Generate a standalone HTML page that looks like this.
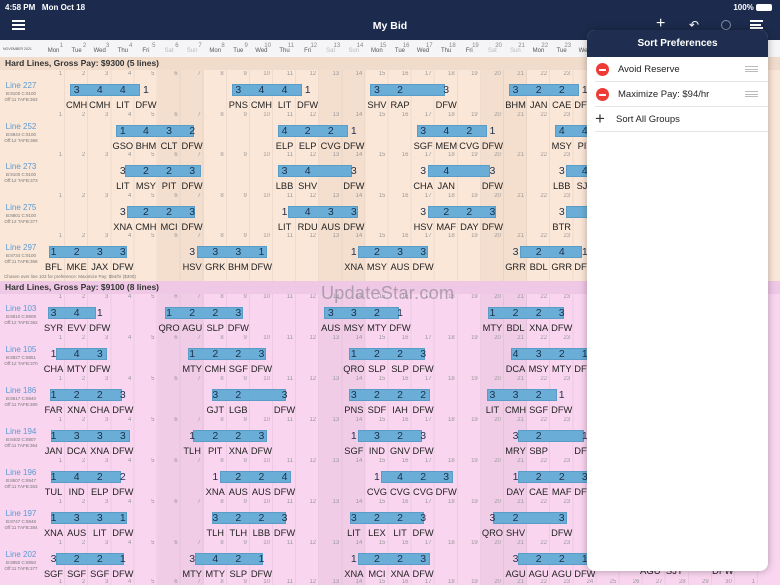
<!DOCTYPE html>
<html><head><meta charset="utf-8"><style>
*{margin:0;padding:0;box-sizing:border-box}
html,body{width:780px;height:585px;overflow:hidden}
body{position:relative;font-family:"Liberation Sans",sans-serif;background:#f9d5ef}
.a{position:absolute}
#nav{left:0;top:0;width:780px;height:40px;background:#1c2b4d;color:#fff}
#dh{left:0;top:40px;width:780px;height:18px;background:#f5f4f6;border-bottom:1px solid #ddd}
.dhr{position:absolute;left:42px;top:0;display:flex}
.dhr span{width:23.1px;height:18px;position:relative;font-size:6px;color:#555;text-align:center;line-height:22px}
.dhr span i{position:absolute;right:2px;top:-5px;font-style:normal;font-size:6px;color:#888}
.dhr span.w{color:#bbb}
.g1{left:0;top:57px;width:780px;height:224px;background:#fbe7d8}
.g2{left:0;top:281px;width:780px;height:304px;background:#f9d5ef}
.gh{position:absolute;left:0;width:780px;height:13px;font-size:8.5px;font-weight:bold;color:#333;padding-left:5px;line-height:13px}
.wk{position:absolute;width:46.2px}
.vl{position:absolute;left:42px;width:738px;background:repeating-linear-gradient(90deg,transparent 0,transparent 22.1px,rgba(0,0,0,.05) 22.1px,rgba(0,0,0,.05) 23.1px)}
.r{position:absolute;left:0;width:780px;height:41px;overflow:hidden}
.dn{position:absolute;left:42px;top:0;display:flex}
.dn span{width:23.1px;text-align:right;padding-right:3px;font-size:6px;color:#999}
.lb{position:absolute;left:0;width:42px;top:10px;text-align:center;color:#5a9ad2;font-size:8px;line-height:10px}
.lb em{display:block;font-style:normal;color:#777;font-size:4.5px;line-height:6px}
.t{position:absolute;top:0}
.t i{position:absolute;top:13px;left:5px;height:12px;background:#6aaed8;border:1px solid #5a9cc8}
.t b{position:absolute;top:12px;left:0;display:flex;font-weight:normal;font-size:10.5px;color:#1d2f4a;line-height:14px}
.t u{position:absolute;top:28px;left:0;display:flex;text-decoration:none;font-size:9.3px;color:#222;line-height:12px}
.t s{text-decoration:none;width:23.1px;text-align:center;display:block;white-space:nowrap}
#pop{left:587px;top:30px;width:181px;height:541px;background:#fff;border-radius:8px;box-shadow:0 0 8px rgba(0,0,0,.3);overflow:hidden}
#pop .h{height:27px;background:#1f2e50;color:#fff;font-weight:bold;font-size:10px;text-align:center;line-height:27px}
.pr{position:relative;height:25px;border-bottom:1px solid #e4e4e4;margin-left:8px;font-size:9.5px;color:#222;line-height:25px;padding-left:23px}
.mi{position:absolute;left:1px;top:6px;width:13px;height:13px;border-radius:50%;background:#ef3b36}
.mi:after{content:"";position:absolute;left:3px;top:6px;width:7px;height:1.5px;background:#fff}
.hd{position:absolute;right:10px;top:9px;width:13px;height:6px;border-top:1px solid #bbb;border-bottom:1px solid #bbb}
.hd:after{content:"";position:absolute;left:0;top:2px;width:13px;border-top:1px solid #bbb}
</style></head><body>
<div id="nav" class="a">
<div class="a" style="left:5px;top:3px;font-size:8px;font-weight:bold">4:58 PM&nbsp;&nbsp;&nbsp;Mon Oct 18</div>
<div class="a" style="right:8px;top:3px;font-size:8px;font-weight:bold">100% <span style="display:inline-block;width:16px;height:7px;background:#fff;border-radius:2px;vertical-align:-1px"></span></div>
<div class="a" style="left:12px;top:20px;width:13px;height:10px;border-top:2px solid #fff;border-bottom:2px solid #fff"><div style="margin-top:2px;border-top:2px solid #fff"></div></div>
<div class="a" style="left:0;width:780px;top:20px;text-align:center;font-size:10.5px;font-weight:bold">My Bid</div>
<div class="a" style="left:656px;top:15px;font-size:16px;font-weight:300">+</div>
<div class="a" style="left:689px;top:18px;font-size:12px">&#8630;</div>
<div class="a" style="left:721px;top:20px;width:10px;height:10px;border:1.5px solid #8890a6;border-radius:50%"></div>
<div class="a" style="left:750px;top:20px;width:13px;height:9px;border-top:2px solid #fff;border-bottom:2px solid #fff"><div style="margin-top:1.5px;width:11px;border-top:2px solid #fff"></div></div>
</div>
<div id="dh" class="a">
<div class="a" style="left:3px;top:7px;font-size:3.5px;color:#555">NOVEMBER 2021</div>
<div class="dhr"><span>Mon<i>1</i></span><span>Tue<i>2</i></span><span>Wed<i>3</i></span><span>Thu<i>4</i></span><span>Fri<i>5</i></span><span class="w">Sat<i>6</i></span><span class="w">Sun<i>7</i></span><span>Mon<i>8</i></span><span>Tue<i>9</i></span><span>Wed<i>10</i></span><span>Thu<i>11</i></span><span>Fri<i>12</i></span><span class="w">Sat<i>13</i></span><span class="w">Sun<i>14</i></span><span>Mon<i>15</i></span><span>Tue<i>16</i></span><span>Wed<i>17</i></span><span>Thu<i>18</i></span><span>Fri<i>19</i></span><span class="w">Sat<i>20</i></span><span class="w">Sun<i>21</i></span><span>Mon<i>22</i></span><span>Tue<i>23</i></span><span>Wed<i>24</i></span><span>Thu<i>25</i></span><span>Fri<i>26</i></span><span class="w">Sat<i>27</i></span><span class="w">Sun<i>28</i></span><span>Mon<i>29</i></span><span>Tue<i>30</i></span><span>Wed<i>1</i></span></div>
</div>

<div class="a g1">
<div class="wk" style="left:157.5px;top:13px;height:211px;background:#f4dfcf"></div>
<div class="wk" style="left:319.2px;top:13px;height:211px;background:#f4dfcf"></div>
<div class="wk" style="left:480.9px;top:13px;height:211px;background:#f4dfcf"></div>
<div class="vl" style="top:13px;height:211px"></div>
<div class="gh" style="top:0;background:#f1dccb">Hard Lines, Gross Pay: $9300 (5 lines)</div>
<div class="a" style="left:4px;top:217px;font-size:4.5px;color:#777">Chosen over line 103 for preference: Maximize Pay: $94/hr ($300)</div>
</div>
<div class="a g2">
<div class="wk" style="left:157.5px;top:12px;height:292px;background:#f1cce7"></div>
<div class="wk" style="left:319.2px;top:12px;height:292px;background:#f1cce7"></div>
<div class="wk" style="left:480.9px;top:12px;height:292px;background:#f1cce7"></div>
<div class="vl" style="top:12px;height:292px"></div>
<div class="gh" style="top:0;background:#efc8e6">Hard Lines, Gross Pay: $9100 (8 lines)</div>
</div>

<div class="r" style="top:71px">
<div class="dn"><span>1</span><span>2</span><span>3</span><span>4</span><span>5</span><span>6</span><span>7</span><span>8</span><span>9</span><span>10</span><span>11</span><span>12</span><span>13</span><span>14</span><span>15</span><span>16</span><span>17</span><span>18</span><span>19</span><span>20</span><span>21</span><span>22</span><span>23</span><span>24</span></div>
<div class="lb">Line 227<em>B:9100 C:9100</em><em>Off:11 TAFB:363</em></div>
<div class="t" style="left:65.1px"><i style="width:70px"></i><b><s>3</s><s>4</s><s>4</s><s>1</s></b><u><s>CMH</s><s>CMH</s><s>LIT</s><s>DFW</s></u></div>
<div class="t" style="left:226.8px"><i style="width:70px"></i><b><s>3</s><s>4</s><s>4</s><s>1</s></b><u><s>PNS</s><s>CMH</s><s>LIT</s><s>DFW</s></u></div>
<div class="t" style="left:365.4px"><i style="width:75px"></i><b><s>3</s><s>2</s><s></s><s>3</s></b><u><s>SHV</s><s>RAP</s><s></s><s>DFW</s></u></div>
<div class="t" style="left:504px"><i style="width:70px"></i><b><s>3</s><s>2</s><s>2</s><s>1</s></b><u><s>BHM</s><s>JAN</s><s>CAE</s><s>DFW</s></u></div>
</div>
<div class="r" style="top:111.5px">
<div class="dn"><span>1</span><span>2</span><span>3</span><span>4</span><span>5</span><span>6</span><span>7</span><span>8</span><span>9</span><span>10</span><span>11</span><span>12</span><span>13</span><span>14</span><span>15</span><span>16</span><span>17</span><span>18</span><span>19</span><span>20</span><span>21</span><span>22</span><span>23</span><span>24</span></div>
<div class="lb">Line 252<em>B:8844 C:9100</em><em>Off:12 TAFB:368</em></div>
<div class="t" style="left:111.3px"><i style="width:78px"></i><b><s>1</s><s>4</s><s>3</s><s>2</s></b><u><s>GSO</s><s>BHM</s><s>CLT</s><s>DFW</s></u></div>
<div class="t" style="left:273px"><i style="width:70px"></i><b><s>4</s><s>2</s><s>2</s><s>1</s></b><u><s>ELP</s><s>ELP</s><s>CVG</s><s>DFW</s></u></div>
<div class="t" style="left:411.6px"><i style="width:70px"></i><b><s>3</s><s>4</s><s>2</s><s>1</s></b><u><s>SGF</s><s>MEM</s><s>CVG</s><s>DFW</s></u></div>
<div class="t" style="left:550.2px"><i style="width:40px"></i><b><s>4</s><s>4</s></b><u><s>MSY</s><s>PIT</s></u></div>
</div>
<div class="r" style="top:152px">
<div class="dn"><span>1</span><span>2</span><span>3</span><span>4</span><span>5</span><span>6</span><span>7</span><span>8</span><span>9</span><span>10</span><span>11</span><span>12</span><span>13</span><span>14</span><span>15</span><span>16</span><span>17</span><span>18</span><span>19</span><span>20</span><span>21</span><span>22</span><span>23</span><span>24</span></div>
<div class="lb">Line 273<em>B:9100 C:9100</em><em>Off:12 TAFB:373</em></div>
<div class="t" style="left:111.3px"><i style="width:76px;left:14px"></i><b><s>3</s><s>2</s><s>2</s><s>3</s></b><u><s>LIT</s><s>MSY</s><s>PIT</s><s>DFW</s></u></div>
<div class="t" style="left:273px"><i style="width:74px;left:5px"></i><b><s>3</s><s>4</s><s></s><s>3</s></b><u><s>LBB</s><s>SHV</s><s></s><s>DFW</s></u></div>
<div class="t" style="left:411.6px"><i style="width:62px;left:16px"></i><b><s>3</s><s>4</s><s></s><s>3</s></b><u><s>CHA</s><s>JAN</s><s></s><s>DFW</s></u></div>
<div class="t" style="left:550.2px"><i style="width:40px;left:16px"></i><b><s>3</s><s>4</s></b><u><s>LBB</s><s>SJT</s></u></div>
</div>
<div class="r" style="top:192.5px">
<div class="dn"><span>1</span><span>2</span><span>3</span><span>4</span><span>5</span><span>6</span><span>7</span><span>8</span><span>9</span><span>10</span><span>11</span><span>12</span><span>13</span><span>14</span><span>15</span><span>16</span><span>17</span><span>18</span><span>19</span><span>20</span><span>21</span><span>22</span><span>23</span><span>24</span></div>
<div class="lb">Line 275<em>B:8801 C:9100</em><em>Off:12 TAFB:377</em></div>
<div class="t" style="left:111.3px"><i style="width:68px;left:16px"></i><b><s>3</s><s>2</s><s>2</s><s>3</s></b><u><s>XNA</s><s>CMH</s><s>MCI</s><s>DFW</s></u></div>
<div class="t" style="left:273px"><i style="width:70px;left:15px"></i><b><s>1</s><s>4</s><s>3</s><s>3</s></b><u><s>LIT</s><s>RDU</s><s>AUS</s><s>DFW</s></u></div>
<div class="t" style="left:411.6px"><i style="width:68px;left:16px"></i><b><s>3</s><s>2</s><s>2</s><s>3</s></b><u><s>HSV</s><s>MAF</s><s>DAY</s><s>DFW</s></u></div>
<div class="t" style="left:550.2px"><i style="width:40px;left:16px"></i><b><s>3</s></b><u><s>BTR</s></u></div>
</div>
<div class="r" style="top:233px">
<div class="dn"><span>1</span><span>2</span><span>3</span><span>4</span><span>5</span><span>6</span><span>7</span><span>8</span><span>9</span><span>10</span><span>11</span><span>12</span><span>13</span><span>14</span><span>15</span><span>16</span><span>17</span><span>18</span><span>19</span><span>20</span><span>21</span><span>22</span><span>23</span><span>24</span></div>
<div class="lb">Line 297<em>B:8734 C:9100</em><em>Off:11 TAFB:368</em></div>
<div class="t" style="left:42px"><i style="width:78px;left:7px"></i><b><s>1</s><s>2</s><s>3</s><s>3</s></b><u><s>BFL</s><s>MKE</s><s>JAX</s><s>DFW</s></u></div>
<div class="t" style="left:180.6px"><i style="width:70px;left:16px"></i><b><s>3</s><s>3</s><s>3</s><s>1</s></b><u><s>HSV</s><s>GRK</s><s>BHM</s><s>DFW</s></u></div>
<div class="t" style="left:342.3px"><i style="width:70px;left:16px"></i><b><s>1</s><s>2</s><s>3</s><s>3</s></b><u><s>XNA</s><s>MSY</s><s>AUS</s><s>DFW</s></u></div>
<div class="t" style="left:504px"><i style="width:62px;left:16px"></i><b><s>3</s><s>2</s><s>4</s><s>1</s></b><u><s>GRR</s><s>BDL</s><s>GRR</s><s>DFW</s></u></div>
</div>

<div class="r" style="top:294px">
<div class="dn"><span>1</span><span>2</span><span>3</span><span>4</span><span>5</span><span>6</span><span>7</span><span>8</span><span>9</span><span>10</span><span>11</span><span>12</span><span>13</span><span>14</span><span>15</span><span>16</span><span>17</span><span>18</span><span>19</span><span>20</span><span>21</span><span>22</span><span>23</span><span>24</span></div>
<div class="lb">Line 103<em>B:8810 C:8909</em><em>Off:12 TAFB:362</em></div>
<div class="t" style="left:42px"><i style="width:48px;left:6px"></i><b><s>3</s><s>4</s><s>1</s></b><u><s>SYR</s><s>EVV</s><s>DFW</s></u></div>
<div class="t" style="left:157.5px"><i style="width:78px;left:7px"></i><b><s>1</s><s>2</s><s>2</s><s>3</s></b><u><s>QRO</s><s>AGU</s><s>SLP</s><s>DFW</s></u></div>
<div class="t" style="left:319.2px"><i style="width:75px;left:5px"></i><b><s>3</s><s>3</s><s>2</s><s>1</s></b><u><s>AUS</s><s>MSY</s><s>MTY</s><s>DFW</s></u></div>
<div class="t" style="left:480.9px"><i style="width:76px;left:7px"></i><b><s>1</s><s>2</s><s>2</s><s>3</s></b><u><s>MTY</s><s>BDL</s><s>XNA</s><s>DFW</s></u></div>
</div>
<div class="r" style="top:335px">
<div class="dn"><span>1</span><span>2</span><span>3</span><span>4</span><span>5</span><span>6</span><span>7</span><span>8</span><span>9</span><span>10</span><span>11</span><span>12</span><span>13</span><span>14</span><span>15</span><span>16</span><span>17</span><span>18</span><span>19</span><span>20</span><span>21</span><span>22</span><span>23</span><span>24</span></div>
<div class="lb">Line 105<em>B:8827 C:8851</em><em>Off:12 TAFB:370</em></div>
<div class="t" style="left:42px"><i style="width:51px;left:14px"></i><b><s>1</s><s>4</s><s>3</s></b><u><s>CHA</s><s>MTY</s><s>DFW</s></u></div>
<div class="t" style="left:180.6px"><i style="width:78px;left:7px"></i><b><s>1</s><s>2</s><s>2</s><s>3</s></b><u><s>MTY</s><s>CMH</s><s>SGF</s><s>DFW</s></u></div>
<div class="t" style="left:342.3px"><i style="width:76px;left:7px"></i><b><s>1</s><s>2</s><s>2</s><s>3</s></b><u><s>QRO</s><s>SLP</s><s>SLP</s><s>DFW</s></u></div>
<div class="t" style="left:504px"><i style="width:80px;left:7px"></i><b><s>4</s><s>3</s><s>2</s><s>1</s></b><u><s>DCA</s><s>MSY</s><s>MTY</s><s>DFW</s></u></div>
</div>
<div class="r" style="top:376px">
<div class="dn"><span>1</span><span>2</span><span>3</span><span>4</span><span>5</span><span>6</span><span>7</span><span>8</span><span>9</span><span>10</span><span>11</span><span>12</span><span>13</span><span>14</span><span>15</span><span>16</span><span>17</span><span>18</span><span>19</span><span>20</span><span>21</span><span>22</span><span>23</span><span>24</span></div>
<div class="lb">Line 186<em>B:8617 C:8840</em><em>Off:11 TAFB:380</em></div>
<div class="t" style="left:42px"><i style="width:72px;left:8px"></i><b><s>1</s><s>2</s><s>2</s><s>3</s></b><u><s>FAR</s><s>XNA</s><s>CHA</s><s>DFW</s></u></div>
<div class="t" style="left:203.7px"><i style="width:74px;left:8px"></i><b><s>3</s><s>2</s><s></s><s>3</s></b><u><s>GJT</s><s>LGB</s><s></s><s>DFW</s></u></div>
<div class="t" style="left:342.3px"><i style="width:81px;left:7px"></i><b><s>3</s><s>2</s><s>2</s><s>2</s></b><u><s>PNS</s><s>SDF</s><s>IAH</s><s>DFW</s></u></div>
<div class="t" style="left:480.9px"><i style="width:70px;left:6px"></i><b><s>3</s><s>3</s><s>2</s><s>1</s></b><u><s>LIT</s><s>CMH</s><s>SGF</s><s>DFW</s></u></div>
</div>
<div class="r" style="top:417px">
<div class="dn"><span>1</span><span>2</span><span>3</span><span>4</span><span>5</span><span>6</span><span>7</span><span>8</span><span>9</span><span>10</span><span>11</span><span>12</span><span>13</span><span>14</span><span>15</span><span>16</span><span>17</span><span>18</span><span>19</span><span>20</span><span>21</span><span>22</span><span>23</span><span>24</span></div>
<div class="lb">Line 194<em>B:8402 C:8807</em><em>Off:11 TAFB:364</em></div>
<div class="t" style="left:42px"><i style="width:79px;left:9px"></i><b><s>1</s><s>3</s><s>3</s><s>3</s></b><u><s>JAN</s><s>DCA</s><s>XNA</s><s>DFW</s></u></div>
<div class="t" style="left:180.6px"><i style="width:74px;left:12px"></i><b><s>1</s><s>2</s><s>2</s><s>3</s></b><u><s>TLH</s><s>PIT</s><s>XNA</s><s>DFW</s></u></div>
<div class="t" style="left:342.3px"><i style="width:64px;left:16px"></i><b><s>1</s><s>3</s><s>2</s><s>3</s></b><u><s>SGF</s><s>IND</s><s>GNV</s><s>DFW</s></u></div>
<div class="t" style="left:504px"><i style="width:66px;left:14px"></i><b><s>3</s><s>2</s><s></s><s>1</s></b><u><s>MRY</s><s>SBP</s><s></s><s>DFW</s></u></div>
</div>
<div class="r" style="top:458px">
<div class="dn"><span>1</span><span>2</span><span>3</span><span>4</span><span>5</span><span>6</span><span>7</span><span>8</span><span>9</span><span>10</span><span>11</span><span>12</span><span>13</span><span>14</span><span>15</span><span>16</span><span>17</span><span>18</span><span>19</span><span>20</span><span>21</span><span>22</span><span>23</span><span>24</span></div>
<div class="lb">Line 196<em>B:8607 C:8947</em><em>Off:11 TAFB:363</em></div>
<div class="t" style="left:42px"><i style="width:70px;left:9px"></i><b><s>1</s><s>4</s><s>2</s><s>2</s></b><u><s>TUL</s><s>IND</s><s>ELP</s><s>DFW</s></u></div>
<div class="t" style="left:203.7px"><i style="width:71px;left:16px"></i><b><s>1</s><s>2</s><s>2</s><s>4</s></b><u><s>XNA</s><s>AUS</s><s>AUS</s><s>DFW</s></u></div>
<div class="t" style="left:365.4px"><i style="width:72px;left:16px"></i><b><s>1</s><s>4</s><s>2</s><s>3</s></b><u><s>CVG</s><s>CVG</s><s>CVG</s><s>DFW</s></u></div>
<div class="t" style="left:504px"><i style="width:82px;left:14px"></i><b><s>1</s><s>2</s><s>2</s><s>3</s></b><u><s>DAY</s><s>CAE</s><s>MAF</s><s>DFW</s></u></div>
</div>
<div class="r" style="top:499px">
<div class="dn"><span>1</span><span>2</span><span>3</span><span>4</span><span>5</span><span>6</span><span>7</span><span>8</span><span>9</span><span>10</span><span>11</span><span>12</span><span>13</span><span>14</span><span>15</span><span>16</span><span>17</span><span>18</span><span>19</span><span>20</span><span>21</span><span>22</span><span>23</span><span>24</span></div>
<div class="lb">Line 197<em>B:8747 C:8848</em><em>Off:11 TAFB:384</em></div>
<div class="t" style="left:42px"><i style="width:76px;left:9px"></i><b><s>1</s><s>3</s><s>3</s><s>1</s></b><u><s>XNA</s><s>AUS</s><s>LIT</s><s>DFW</s></u></div>
<div class="t" style="left:203.7px"><i style="width:74px;left:8px"></i><b><s>3</s><s>2</s><s>2</s><s>3</s></b><u><s>TLH</s><s>TLH</s><s>LBB</s><s>DFW</s></u></div>
<div class="t" style="left:342.3px"><i style="width:74px;left:8px"></i><b><s>3</s><s>2</s><s>2</s><s>3</s></b><u><s>LIT</s><s>LEX</s><s>LIT</s><s>DFW</s></u></div>
<div class="t" style="left:480.9px"><i style="width:74px;left:12px"></i><b><s>3</s><s>2</s><s></s><s>3</s></b><u><s>QRO</s><s>SHV</s><s></s><s>DFW</s></u></div>
</div>
<div class="r" style="top:540px">
<div class="dn"><span>1</span><span>2</span><span>3</span><span>4</span><span>5</span><span>6</span><span>7</span><span>8</span><span>9</span><span>10</span><span>11</span><span>12</span><span>13</span><span>14</span><span>15</span><span>16</span><span>17</span><span>18</span><span>19</span><span>20</span><span>21</span><span>22</span><span>23</span><span>24</span></div>
<div class="lb">Line 202<em>B:8850 C:8850</em><em>Off:11 TAFB:377</em></div>
<div class="t" style="left:42px"><i style="width:68px;left:14px"></i><b><s>3</s><s>2</s><s>2</s><s>1</s></b><u><s>SGF</s><s>SGF</s><s>SGF</s><s>DFW</s></u></div>
<div class="t" style="left:180.6px"><i style="width:68px;left:14px"></i><b><s>3</s><s>4</s><s>2</s><s>1</s></b><u><s>MTY</s><s>MTY</s><s>SLP</s><s>DFW</s></u></div>
<div class="t" style="left:342.3px"><i style="width:72px;left:16px"></i><b><s>1</s><s>2</s><s>2</s><s>3</s></b><u><s>XNA</s><s>MCI</s><s>XNA</s><s>DFW</s></u></div>
<div class="t" style="left:504px"><i style="width:82px;left:14px"></i><b><s>3</s><s>2</s><s>2</s><s>1</s></b><u><s>AGU</s><s>AGU</s><s>AGU</s><s>DFW</s></u></div>
</div>
<div class="r" style="top:579px;height:6px">
<div class="dn"><span>1</span><span>2</span><span>3</span><span>4</span><span>5</span><span>6</span><span>7</span><span>8</span><span>9</span><span>10</span><span>11</span><span>12</span><span>13</span><span>14</span><span>15</span><span>16</span><span>17</span><span>18</span><span>19</span><span>20</span><span>21</span><span>22</span><span>23</span><span>24</span><span>25</span><span>26</span><span>27</span><span>28</span><span>29</span><span>30</span><span>1</span></div>
</div>
<div class="a" style="left:640px;top:566px;font-size:9.5px;color:#222">AGU&nbsp; SJT</div>
<div class="a" style="left:712px;top:566px;font-size:9.5px;color:#222">DFW</div>

<div class="a" style="left:321px;top:283px;font-size:18px;color:rgba(120,120,130,.55);letter-spacing:.3px">UpdateStar.com</div>

<div id="pop" class="a">
<div class="h">Sort Preferences</div>
<div class="pr"><span class="mi"></span>Avoid Reserve<span class="hd"></span></div>
<div class="pr"><span class="mi"></span>Maximize Pay: $94/hr<span class="hd"></span></div>
<div class="pr" style="padding-left:21px"><span style="position:absolute;left:0;top:-1px;font-size:17px;font-weight:300;color:#333">+</span>Sort All Groups</div>
</div>
</body></html>
